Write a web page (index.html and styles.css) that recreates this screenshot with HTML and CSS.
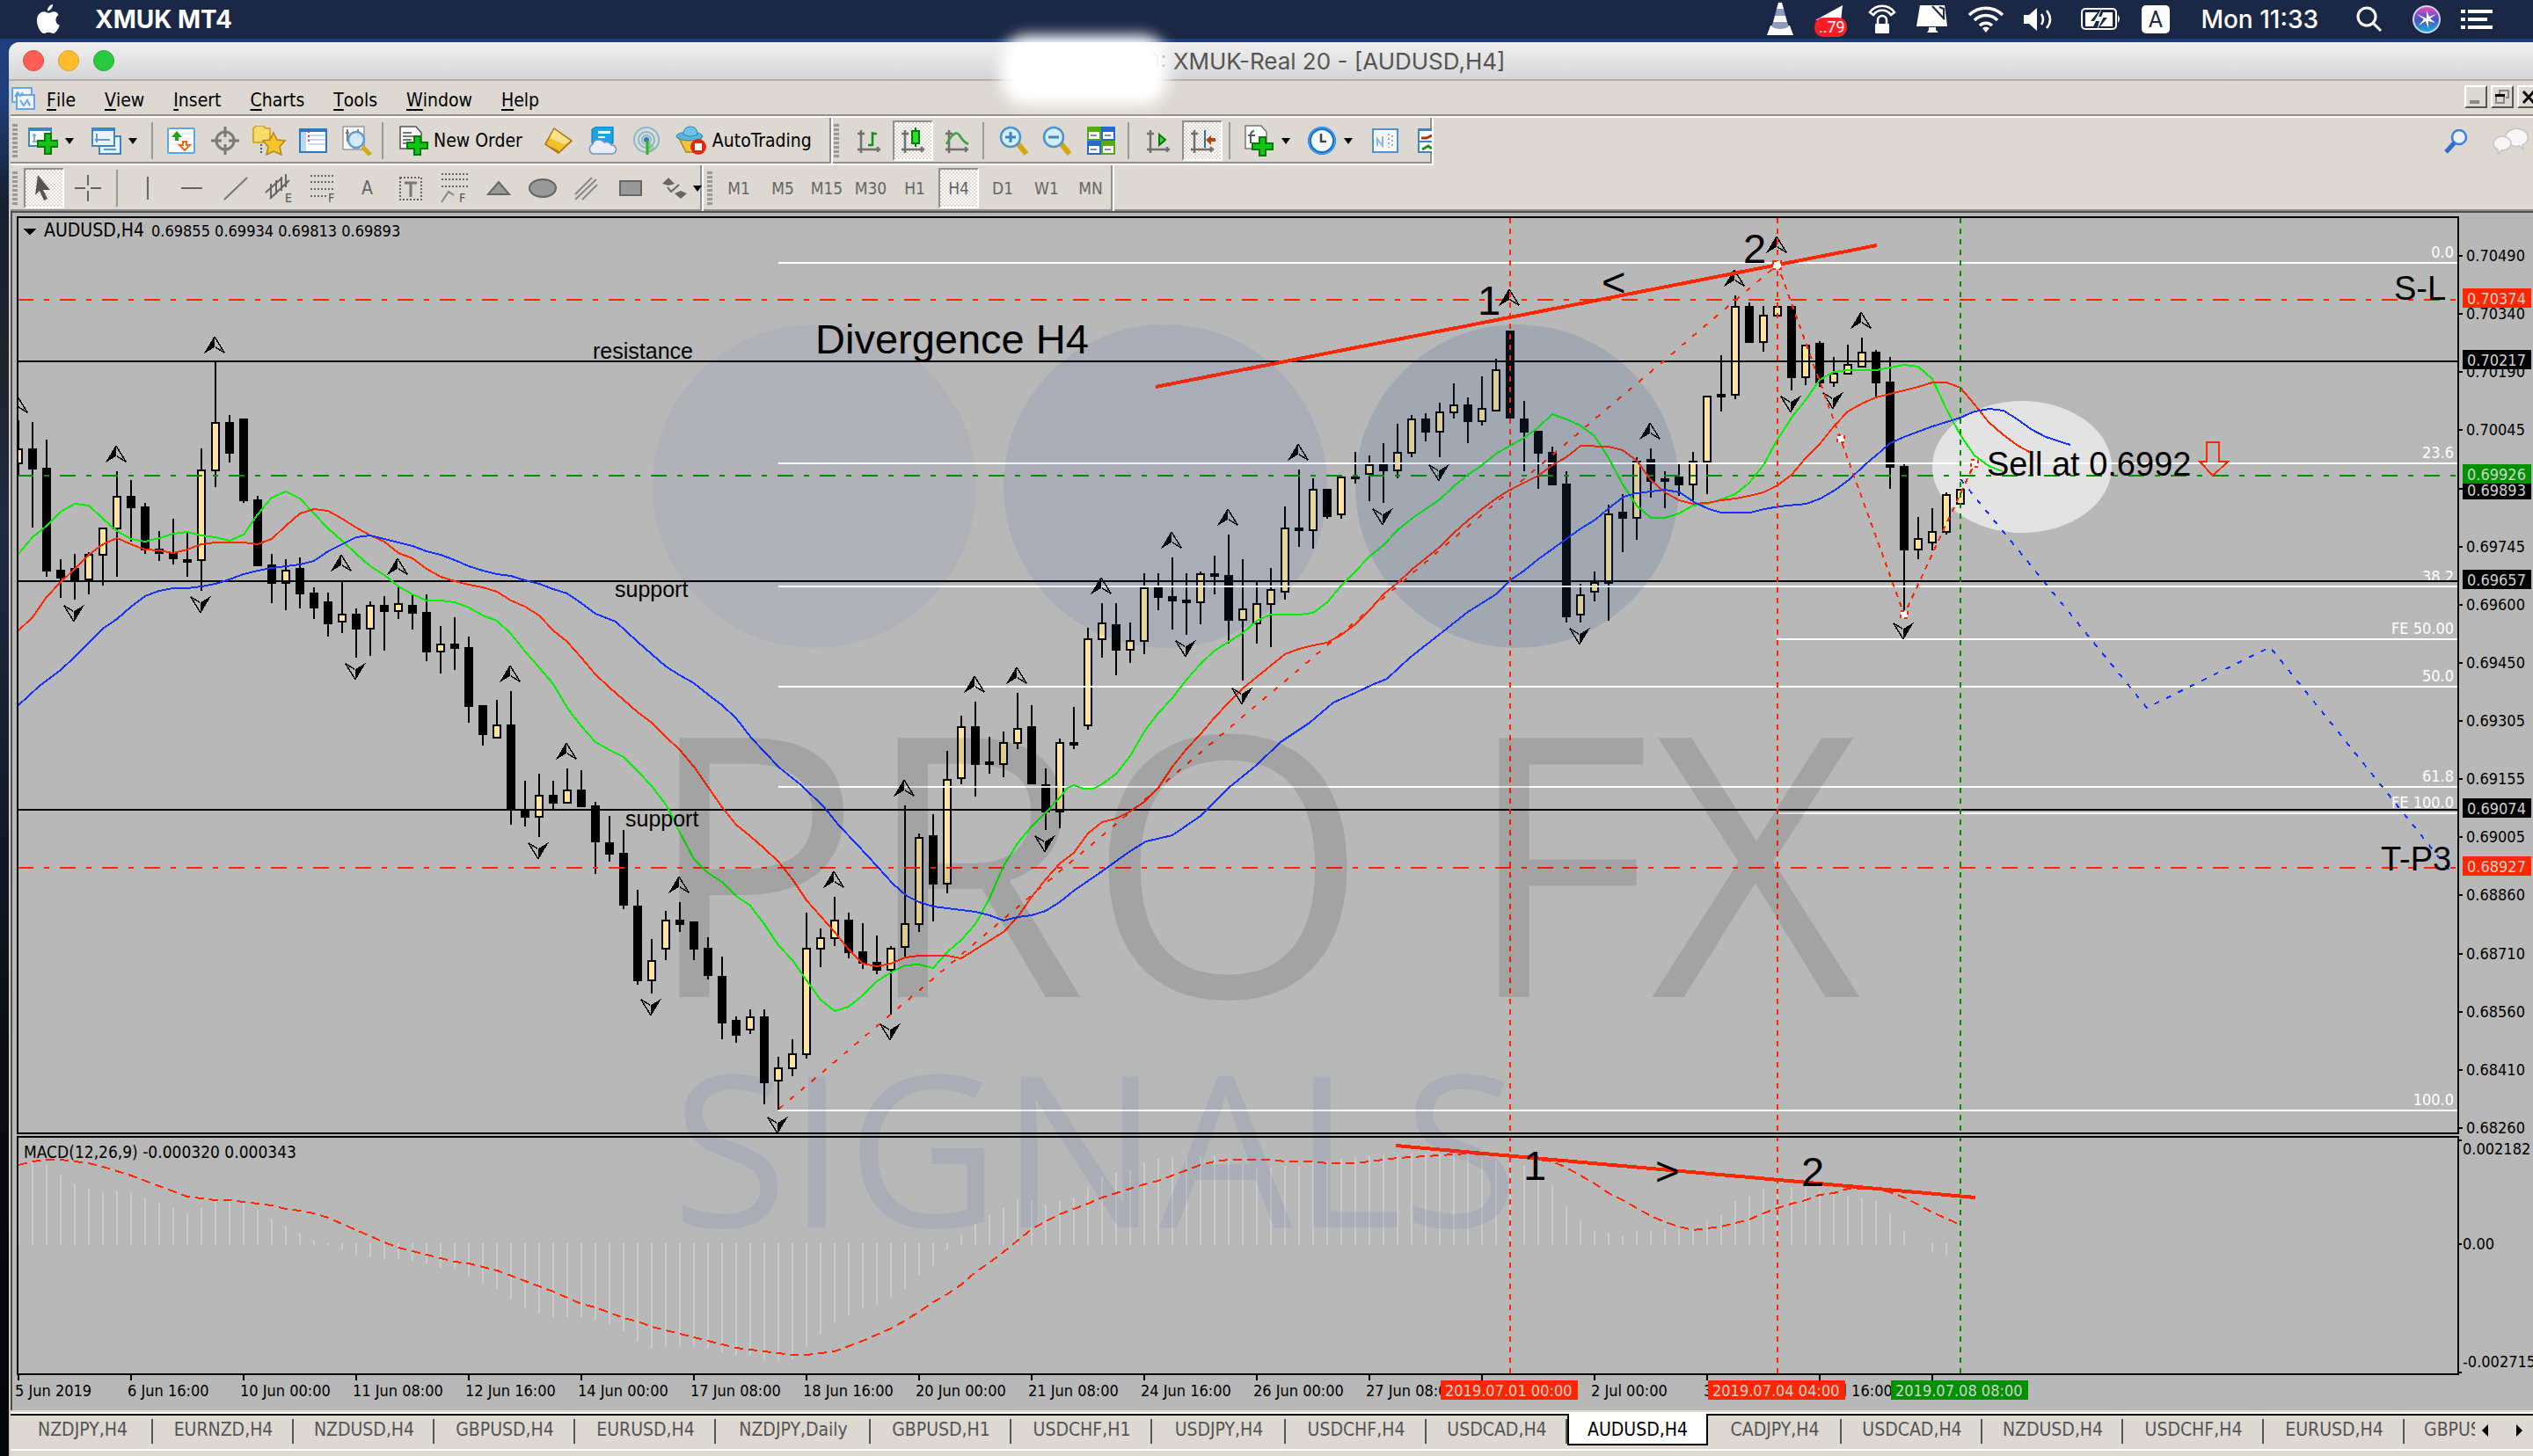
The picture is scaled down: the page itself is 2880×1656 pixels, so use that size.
FILE: index.html
```html
<!DOCTYPE html>
<html lang="en">
<head>
<meta charset="utf-8">
<title>XMUK-Real 20 - [AUDUSD,H4]</title>
<link rel="stylesheet" href="styles.css">
</head>
<body>
<header class="mac-bar">
  <button class="mac-item apple" aria-label="Apple menu"><svg width="26" height="34" viewBox="0 0 26 34"><path fill="#fff" d="M18 0c.3 3.500-3 7.500-6 7.400C11.600 4 15 .4 18 0zM24.500 12c-4.500 3-4 9.500 1.300 11.800C24.600 27.500 21.500 33 18.500 33c-2 0-2.800-1.200-5.200-1.200S10 33 8.200 33C4.500 33 0 25 0 18.500S4 8.300 7.800 8.300c2.300 0 3.800 1.500 5.600 1.500 1.700 0 3.500-1.600 6.300-1.500 2 0 3.800 1.500 4.800 3.700z"/></svg></button>
  <button class="mac-item app-name">XMUK MT4</button>
  <div class="mac-status">
    <button class="mac-item" aria-label="VLC"><svg width="32" height="38" viewBox="0 0 32 38"><path fill="#fff" d="M14 0h4l2 7h-8zM10 15h12l2 7H8zM5 26h22l4 11H1z"/><path fill="#8f9dbd" d="M12 7h8l2 8H10zM8 22h16l2 5c-5 4-15 4-20 0z"/></svg></button>
    <button class="mac-item" aria-label="Mail"><svg width="38" height="40" viewBox="0 0 38 40"><path fill="#fff" d="M1 21L32 4l-2 18-8-2z"/><rect x="0" y="18" width="37" height="22" rx="10" fill="#ff1d25"/><text x="5" y="35" class="badge-text">..79</text></svg></button>
    <button class="mac-item" aria-label="VPN"><svg width="32" height="34" viewBox="0 0 32 34"><g fill="none" stroke="#fff" stroke-width="2.500"><path d="M2 9a17 17 0 0 1 28 0l-4 3a12 12 0 0 0-20 0z"/><path d="M11 23v-5a5 5 0 0 1 10 0v5"/></g><rect x="8" y="22" width="16" height="11" rx="1" fill="#fff"/></svg></button>
    <button class="mac-item" aria-label="Display"><svg width="36" height="34" viewBox="0 0 36 34"><path fill="#fff" d="M4 1h28l3 24H0zM14 26h8v3l3 3H12l2-3z"/><path d="M18 2l14 15M26 3l5 2v12" fill="none" stroke="#1b2845" stroke-width="2"/></svg></button>
    <button class="mac-item" aria-label="Wi-Fi"><svg width="40" height="30" viewBox="0 0 40 30"><g fill="none" stroke="#fff" stroke-width="3.500"><path d="M1 10a27 27 0 0 1 38 0M7 16a18 18 0 0 1 26 0M13 22a10 10 0 0 1 14 0"/></g><path fill="#fff" d="M16 25a6 6 0 0 1 8 0l-4 5z"/></svg></button>
    <button class="mac-item" aria-label="Volume"><svg width="34" height="26" viewBox="0 0 34 26"><path fill="#fff" d="M0 8h6l9-8v26l-9-8H0z"/><g fill="none" stroke="#fff" stroke-width="2.500"><path d="M20 7q4 6 0 12M26 3q8 10 0 20"/></g></svg></button>
    <button class="mac-item battery" aria-label="Battery"><svg width="46" height="26" viewBox="0 0 46 26"><rect x="1" y="1" width="39" height="23" rx="4" fill="none" stroke="#fff" stroke-width="2"/><path fill="#fff" d="M5 5h14l-8 10h6l-3 6H5zM25 5h11v16H22l8-10h-7zM42 8q4 4 0 9zM24 0l-4 10h6l-8 16 3-11h-6z"/></svg></button>
    <button class="mac-item" aria-label="Input source"><svg width="32" height="32" viewBox="0 0 32 32"><rect width="32" height="32" rx="5" fill="#fff"/><text x="16" y="25" text-anchor="middle" class="input-text">A</text></svg></button>
    <button class="mac-item clock">Mon 11:33</button>
    <button class="mac-item" aria-label="Search"><svg width="30" height="30" viewBox="0 0 30 30"><g fill="none" stroke="#fff" stroke-width="3"><circle cx="12" cy="12" r="10"/><path d="M19 19l9 9"/></g></svg></button>
    <button class="mac-item siri" aria-label="Siri"><svg width="32" height="32" viewBox="0 0 32 32"><defs><linearGradient id="siri" x1="0" y1="0" x2="0" y2="1"><stop offset="0" stop-color="#f04fb8"/><stop offset=".5" stop-color="#4a50c8"/><stop offset="1" stop-color="#15b6d8"/></linearGradient></defs><circle cx="16" cy="16" r="15" fill="url(#siri)" stroke="#cfd5ea" stroke-width="2"/><path fill="#fff" d="M16 15l-11-5 8 6-6 7 8-5 3 8 0-8 8 2-6-5 7-5-8 3-3-7z"/></svg></button>
    <button class="mac-item" aria-label="Notification Center"><svg width="36" height="22" viewBox="0 0 36 22"><path fill="#fff" d="M0 0h5v4H0zM8 0h28v4H8zM0 9h5v4H0zM8 9h22v4H8zM0 18h5v4H0zM8 18h28v4H8z"/></svg></button>
  </div>
</header>

<main class="window">
  <div class="title-bar">
    <div class="lights"><button class="light red" aria-label="Close"></button><button class="light amber" aria-label="Minimise"></button><button class="light green" aria-label="Zoom"></button></div>
    <h1 class="title">0: XMUK-Real 20 - [AUDUSD,H4]</h1>
    <div class="redaction"></div>
  </div>

  <nav class="menu-bar">
    <svg class="doc-icon" width="30" height="28" viewBox="0 0 30 28"><g fill="#eef5fd" stroke="#6aa5ea" stroke-width="2"><rect x="2" y="2" width="22" height="16"/><rect x="7" y="10" width="20" height="16"/></g><path d="M5 12l3-5 3 4 3-4M11 16l4 6 4-6 3 6" fill="none" stroke="#6aa5ea" stroke-width="2"/></svg>
    <button><u>F</u>ile</button><button><u>V</u>iew</button><button><u>I</u>nsert</button><button><u>C</u>harts</button><button><u>T</u>ools</button><button><u>W</u>indow</button><button><u>H</u>elp</button>
    <div class="mdi">
      <button aria-label="Minimise chart"><svg width="22" height="22" viewBox="0 0 22 22"><path fill="#888" d="M4 15h11v4H4z"/></svg></button>
      <button aria-label="Restore chart"><svg width="22" height="22" viewBox="0 0 22 22"><path fill="none" stroke="#888" stroke-width="2" d="M8 8V4h10v8h-3M4 9h9v9H4z"/><path fill="#000" d="M3 8h11v3H3z"/></svg></button>
      <button aria-label="Close chart"><svg width="22" height="22" viewBox="0 0 22 22"><path d="M5 5l12 13M17 5L5 18" stroke="#000" stroke-width="3"/></svg></button>
    </div>
  </nav>

  <div class="tool-row">
    <div class="band">
      <i class="grip"></i>
      <button class="tool drop" aria-label="New chart"><svg width="34" height="32" viewBox="0 0 34 32"><path fill="#fff" stroke="#3f84c4" stroke-width="2" d="M1 2h25v20H1z"/><path fill="#3f84c4" d="M0 1h27v4H0z"/><path d="M7 8v10M5 10h4M5 17h14" stroke="#7eaed6" stroke-width="2"/><path fill="#12c512" stroke="#067a06" stroke-width="2" d="M19 8h7v8h8v7h-8v8h-7v-8h-8v-7h8z"/></svg></button>
      <button class="tool drop" aria-label="Profiles"><svg width="34" height="32" viewBox="0 0 34 32"><g fill="#e9f3fc" stroke="#3f84c4" stroke-width="2"><path d="M9 11h24v20H9z"/><path d="M1 2h25v20H1z"/></g><path fill="#3f84c4" d="M0 1h27v4H0z"/><path d="M6 8v10M4 15h17M14 26h14" stroke="#5a9bd3" stroke-width="2"/></svg></button>
      <i class="sep"></i>
      <button class="tool" aria-label="Market Watch"><svg width="32" height="32" viewBox="0 0 32 32"><rect x="1" y="2" width="30" height="28" rx="2" fill="#fff" stroke="#5aa6e0" stroke-width="2"/><path d="M5 8h22M5 14h22M5 20h22" stroke="#d8dde2"/><path fill="#1ea51e" d="M11 5l6 7h-4v4H9v-4H5z"/><path fill="#fff" stroke="#ee6c18" stroke-width="2" d="M18 17h4v4h4l-6 6-6-6h4z"/></svg></button>
      <button class="tool" aria-label="Data Window"><svg width="32" height="32" viewBox="0 0 32 32"><g fill="none" stroke="#7a7a7a" stroke-width="3"><circle cx="16" cy="16" r="10"/><path d="M16 0v12M16 20v12M0 16h12M20 16h12"/></g></svg></button>
      <button class="tool" aria-label="Navigator"><svg width="38" height="34" viewBox="0 0 38 34"><path fill="#f8dc6a" stroke="#c99b17" stroke-width="1.500" d="M1 3l4-3h7l3 3h5v16H1z"/><path d="M10 21v12" stroke="#555" stroke-width="2" stroke-dasharray="2 2"/><path fill="#f6c52e" stroke="#b98612" stroke-width="1.500" d="M24 8l4 8 9 1-6 7 2 9-9-4-8 4 2-9-6-7 8-1z"/></svg></button>
      <button class="tool" aria-label="Terminal"><svg width="32" height="32" viewBox="0 0 32 32"><path fill="#fff" stroke="#2f78bf" stroke-width="2" d="M1 3h30v26H1z"/><path fill="#2f78bf" d="M0 2h32v4H0z"/><path fill="#bcd7f3" d="M2 6h6v22H2z"/><path d="M10 10h20M10 15h20M10 20h20" stroke="#b8d0f0" stroke-width="1.500"/><path d="M11 5v14" stroke="#e33" stroke-width="2" stroke-dasharray="2 3"/></svg></button>
      <button class="tool" aria-label="Strategy Tester"><svg width="34" height="34" viewBox="0 0 34 34"><path fill="#fafafa" stroke="#9a9a9a" stroke-width="1.500" d="M1 1h24v26H1z"/><path d="M6 4v14M4 8h4M18 4v9" stroke="#777" stroke-width="2"/><path stroke="#d6a80f" stroke-width="5" d="M23 24l9 9"/><circle cx="16" cy="16" r="9" fill="#cfe8fb" fill-opacity=".9" stroke="#5d9cd0" stroke-width="2.500"/></svg></button>
      <i class="sep"></i>
      <button class="tool text order"><svg width="34" height="34" viewBox="0 0 34 34"><path fill="#fff" stroke="#555" stroke-width="1.500" d="M1 1h18l6 7v18H1z"/><path d="M4 8h10M4 12h16M4 16h10M4 20h8" stroke="#777" stroke-width="2"/><path fill="#12c512" stroke="#067a06" stroke-width="2" d="M17 12h7v7h8v7h-8v7h-7v-7H9v-7h8z"/></svg>New Order</button>
      <button class="tool" aria-label="MetaEditor"><svg width="34" height="32" viewBox="0 0 34 32"><path fill="#f3bf2d" stroke="#a66e0a" stroke-width="1.500" d="M12 2l20 14-15 14L2 20z"/><path fill="#fbe28a" d="M12 3l18 13-7 4L7 13z"/><path fill="#b97b0e" d="M2 20l15 7v3z"/></svg></button>
      <button class="tool" aria-label="Virtual hosting"><svg width="34" height="32" viewBox="0 0 34 32"><path fill="#17a6ea" stroke="#0b6dad" d="M5 3l5-3h19v19H5z"/><path fill="#fff" d="M12 5h14v3H12zM12 11h8v2h-8z"/><path fill="#e8edf7" stroke="#7b93bd" stroke-width="1.500" d="M6 31a6 6 0 0 1 0-11 7 6 0 0 1 13-2 6 5 0 0 1 8 3 5 5 0 0 1 1 10z"/></svg></button>
      <button class="tool" aria-label="Signals"><svg width="34" height="32" viewBox="0 0 34 32"><g fill="none" stroke="#8fb4c4" stroke-width="2"><circle cx="17" cy="15" r="14" fill="#d3e0dc"/><circle cx="17" cy="15" r="9"/><circle cx="17" cy="15" r="5"/></g><circle cx="17" cy="15" r="3" fill="#2a78c8"/><path d="M18 16v15l10-6z" fill="#6cc46c" fill-opacity=".6"/><path d="M18 16v16" stroke="#35b035" stroke-width="3"/></svg></button>
      <button class="tool text auto"><svg width="36" height="34" viewBox="0 0 36 34"><path fill="#f4c73a" stroke="#b08410" stroke-width="1.500" d="M3 12l27 0-8 18-10 0z"/><ellipse cx="16" cy="12" rx="15" ry="5" fill="#5cb4dc" stroke="#2c86b4"/><path fill="#6fc3e6" stroke="#2c86b4" d="M9 10q0-9 8-9t8 9q-8 4-16 0z"/><circle cx="26" cy="24" r="9" fill="#dd2b10"/><path fill="#fff" d="M22 20h8v8h-8z"/></svg>AutoTrading</button>
    </div>
    <div class="band charts">
      <i class="grip"></i>
      <button class="tool" aria-label="Bar chart"><svg width="32" height="32" viewBox="0 0 32 32"><path d="M7 4v26M3 8h8M3 26h26M26 23v6" stroke="#6f6f6f" stroke-width="2.500" fill="none"/><path d="M20 6v16M20 8h5M15 21h5" stroke="#129412" stroke-width="2.500"/></svg></button>
      <button class="tool pressed" aria-label="Candlesticks"><svg width="32" height="32" viewBox="0 0 32 32"><path d="M7 4v26M3 8h8M3 26h26M26 23v6" stroke="#6f6f6f" stroke-width="2.500"/><path d="M19 1v22" stroke="#067a06" stroke-width="2"/><path fill="#2be02b" stroke="#067a06" stroke-width="2" d="M15 5h8v14h-8z"/></svg></button>
      <button class="tool" aria-label="Line chart"><svg width="32" height="32" viewBox="0 0 32 32"><path d="M7 4v26M3 8h8M3 26h26M26 23v6" stroke="#6f6f6f" stroke-width="2.500"/><path d="M4 20Q14 2 19 10t10 10" fill="none" stroke="#3da13d" stroke-width="2.500"/></svg></button>
      <i class="sep"></i>
      <button class="tool" aria-label="Zoom in"><svg width="34" height="34" viewBox="0 0 34 34"><path stroke="#d6a80f" stroke-width="6" d="M21 20l10 12"/><circle cx="13" cy="13" r="11" fill="#d3edfc" stroke="#4b94cc" stroke-width="2.500"/><path d="M7 13h12M13 7v12" stroke="#3a86bd" stroke-width="3"/></svg></button>
      <button class="tool" aria-label="Zoom out"><svg width="34" height="34" viewBox="0 0 34 34"><path stroke="#d6a80f" stroke-width="6" d="M21 20l10 12"/><circle cx="13" cy="13" r="11" fill="#d3edfc" stroke="#4b94cc" stroke-width="2.500"/><path d="M7 13h12" stroke="#3a86bd" stroke-width="3"/></svg></button>
      <button class="tool" aria-label="Tile windows"><svg width="32" height="32" viewBox="0 0 32 32"><path fill="#56ab0c" d="M0 0h16v16H0zM16 16h16v16H16z"/><path fill="#2468d6" d="M16 0h16v16H16zM0 16h16v16H0z"/><path fill="#fff" d="M2 6h12v8H2zM18 6h12v8H18zM2 22h12v8H2zM18 22h12v8H18z"/><path d="M4 10h7M20 10h7M4 26h7M20 26h7" stroke="#88b" stroke-width="2"/></svg></button>
      <i class="sep"></i>
      <button class="tool" aria-label="Auto scroll"><svg width="32" height="32" viewBox="0 0 32 32"><path d="M7 4v26M3 8h8M3 26h26M26 23v6" stroke="#6f6f6f" stroke-width="2.500"/><path fill="#2be02b" stroke="#067a06" stroke-width="2" d="M17 9l7 6-7 6z"/></svg></button>
      <button class="tool pressed" aria-label="Chart shift"><svg width="32" height="32" viewBox="0 0 32 32"><path d="M7 4v26M3 8h8M3 26h26M26 23v6" stroke="#6f6f6f" stroke-width="2.500"/><path d="M19 4v20" stroke="#2a6fa8" stroke-width="2"/><path fill="#b6430c" d="M20 15l6-5v3h5v4h-5v4z"/></svg></button>
      <i class="sep"></i>
      <button class="tool drop" aria-label="Indicators"><svg width="34" height="36" viewBox="0 0 34 36"><path fill="#fff" stroke="#777" stroke-width="1.500" d="M1 1h18l6 7v19H1z"/><path d="M11 7q-4 0-4 6v8M4 12h8" fill="none" stroke="#555" stroke-width="2"/><path fill="#12c512" stroke="#067a06" stroke-width="2" d="M17 14h7v7h8v7h-8v7h-7v-7H9v-7h8z"/></svg></button>
      <button class="tool drop" aria-label="Periods"><svg width="34" height="34" viewBox="0 0 34 34"><circle cx="17" cy="17" r="14" fill="#f4f8fc" stroke="#1673d2" stroke-width="4"/><circle cx="17" cy="17" r="15" fill="none" stroke="#58b4f4" stroke-width="1"/><path d="M16 9v9h6" fill="none" stroke="#444" stroke-width="2.500"/></svg></button>
      <button class="tool" aria-label="Templates"><svg width="32" height="32" viewBox="0 0 32 32"><path fill="#f2f8fd" stroke="#4f92cc" stroke-width="2" d="M2 3h28v26H2z"/><path d="M7 22v-8l6 8V11" fill="none" stroke="#8db9dc" stroke-width="2"/><path d="M24 10v14M20 8v16" stroke="#aaa" stroke-width="2" stroke-dasharray="2 3"/></svg></button>
      <button class="tool cut" aria-label="Chart list"><svg width="16" height="32" viewBox="0 0 16 32"><path fill="#fff" stroke="#3f84c4" stroke-width="2" d="M1 3h20v26H1z"/><path fill="#3f84c4" d="M0 2h16v3H0zM0 16h16v2H0z"/><path d="M4 13h6l6-3" stroke="#a03a0c" stroke-width="3" fill="none"/><path d="M5 26l7-4 4 3" stroke="#1c8c1c" stroke-width="3" fill="none"/></svg></button>
    </div>
    <div class="tool-end">
      <button class="tool" aria-label="Find"><svg width="28" height="28" viewBox="0 0 28 28"><path stroke="#2c6fd0" stroke-width="5" d="M12 15L2 26"/><circle cx="17" cy="9" r="8" fill="#edf2fa" stroke="#3d7fdc" stroke-width="2.500"/></svg></button>
      <button class="tool" aria-label="Chat"><svg width="42" height="32" viewBox="0 0 42 32"><g fill="#f6f6f6" stroke="#c4c4c4" stroke-width="1.500"><path d="M34 20l1 5-4-4a13 10 0 1 1 3-1z"/><path d="M6 25l0 6 4-5a10 8 0 1 0-4-1z"/></g></svg></button>
    </div>
  </div>

  <div class="tool-row">
    <div class="band lines">
      <i class="grip"></i>
      <button class="tool pressed" aria-label="Cursor"><svg width="32" height="34" viewBox="0 0 32 34"><path fill="#555" d="M9 2l14 17h-8l5 10-4 2-5-11-5 5z"/></svg></button>
      <button class="tool" aria-label="Crosshair"><svg width="32" height="32" viewBox="0 0 32 32"><path d="M16 1v12M16 19v12M1 16h12M19 16h12" stroke="#666" stroke-width="2"/></svg></button>
      <i class="sep"></i>
      <button class="tool" aria-label="Vertical line"><svg width="32" height="32" viewBox="0 0 32 32"><path d="M16 3v26" stroke="#666" stroke-width="2"/></svg></button>
      <button class="tool" aria-label="Horizontal line"><svg width="32" height="32" viewBox="0 0 32 32"><path d="M4 16h24" stroke="#666" stroke-width="2"/></svg></button>
      <button class="tool" aria-label="Trendline"><svg width="32" height="32" viewBox="0 0 32 32"><path d="M3 29L29 4" stroke="#777" stroke-width="2"/></svg></button>
      <button class="tool" aria-label="Equidistant channel"><svg width="34" height="34" viewBox="0 0 34 34"><path d="M1 22L20 5M6 29L28 8M7 28V12M13 24V8M19 20V4M24 16V1" stroke="#666" stroke-width="2"/><text x="23" y="33" class="glyph">E</text></svg></button>
      <button class="tool" aria-label="Fibonacci retracement"><svg width="34" height="34" viewBox="0 0 34 34"><path d="M2 3h28M2 10h28M2 18h28M2 26h18" stroke="#666" stroke-width="2" stroke-dasharray="2 2"/><text x="22" y="33" class="glyph">F</text></svg></button>
      <button class="tool letter">A</button>
      <button class="tool" aria-label="Text label"><svg width="32" height="32" viewBox="0 0 32 32"><path d="M4 4h24v25H4z" fill="none" stroke="#666" stroke-width="2" stroke-dasharray="2 2"/><path d="M9 10h14M16 10v16" stroke="#777" stroke-width="3"/></svg></button>
      <button class="tool" aria-label="Fibonacci fan"><svg width="34" height="36" viewBox="0 0 34 36"><path d="M2 2h30M2 8h30M2 16h30" stroke="#666" stroke-width="2" stroke-dasharray="2 2"/><path d="M2 34l8-12 6 4" stroke="#888" stroke-width="2" fill="none"/><text x="22" y="34" class="glyph">F</text></svg></button>
      <button class="tool" aria-label="Triangle"><svg width="32" height="32" viewBox="0 0 32 32"><path fill="#999" stroke="#666" stroke-width="2" d="M4 23L16 9l12 14z"/></svg></button>
      <button class="tool" aria-label="Ellipse"><svg width="34" height="32" viewBox="0 0 34 32"><ellipse cx="17" cy="16" rx="15" ry="10" fill="#999" stroke="#666" stroke-width="2"/></svg></button>
      <button class="tool" aria-label="Hatch"><svg width="32" height="32" viewBox="0 0 32 32"><path d="M3 23L22 4M3 29L27 6M11 29l17-17" stroke="#888" stroke-width="2"/></svg></button>
      <button class="tool" aria-label="Rectangle"><svg width="32" height="32" viewBox="0 0 32 32"><path fill="#999" stroke="#666" stroke-width="2" d="M4 8h24v16H4z"/></svg></button>
      <button class="tool" aria-label="Arrows"><svg width="32" height="32" viewBox="0 0 32 32"><path fill="#666" d="M9 4l7 7-7 2-7-2zM23 28l-7-6 7-3 7 3z"/><path d="M8 15l4 5 9-8" stroke="#666" stroke-width="2" fill="none"/></svg></button>
      <i class="caret"></i>
    </div>
    <div class="band periods">
      <i class="grip"></i>
      <button class="tool period">M1</button><button class="tool period">M5</button><button class="tool period">M15</button><button class="tool period">M30</button><button class="tool period">H1</button><button class="tool period pressed">H4</button><button class="tool period">D1</button><button class="tool period">W1</button><button class="tool period">MN</button>
    </div>
  </div>

  <svg class="chart" viewBox="14 242 2866 1362" role="img" aria-label="AUDUSD H4 chart with MACD">
    <defs>
      <g id="up"><path d="M12 0L0 20l12-7z" fill="#000"/><path d="M12 1l11 18-10-6" fill="none" stroke="#000" stroke-width="1.500"/></g>
      <g id="down"><path d="M12 20L24 0 12 7z" fill="#000"/><path d="M12 19L1 1l10 6" fill="none" stroke="#000" stroke-width="1.500"/></g>
      <clipPath id="plot"><rect x="20" y="248" width="2775" height="1314"/></clipPath>
    </defs>
    <ellipse cx="2299" cy="531" rx="102" ry="75" fill="#e3e3e3"/>
    <g clip-path="url(#plot)">
      <g id="hist" class="hist"></g>
      <g id="candles"></g>
      <text class="fib" x="2790" y="293">0.0</text><text class="fib" x="2790" y="521">23.6</text><text class="fib" x="2790" y="662">38.2</text><text class="fib" x="2790" y="721">FE 50.00</text><text class="fib" x="2790" y="775">50.0</text><text class="fib" x="2790" y="889">61.8</text><text class="fib" x="2790" y="919">FE 100.0</text><text class="fib" x="2790" y="1257">100.0</text>
      <path class="level" d="M20 411H2795M20 661H2795M20 921H2795"/>
      <path class="white" d="M885 299H2795M885 527H2795M885 667H2795M885 781H2795M885 895H2795M885 1263H2795M2020 727H2795M2020 925H2795"/>
      <path class="order-line red" d="M20 341H2795M20 987H2795"/>
      <path class="order-line green" d="M20 541H2795"/>
      <g id="averages"></g>
      <g id="fractals"></g>
      <path class="trend" d="M1314 440L2134 279M1587 1303L2246 1362"/>
      <path class="zig" stroke="#ff2600" stroke-dasharray="6 10" d="M886 1261L2021 301"/>
      <path class="zig" stroke="#ff2600" stroke-dasharray="6 6" d="M2021 301L2165 699L2245 527"/>
      <path class="zig" stroke="#1432ff" stroke-dasharray="6 9" d="M2229 545L2441 805L2581 736L2785 990"/>
      <path class="vert red" d="M1717 248V1562M2021 248V1562"/>
      <path class="vert green" d="M2229 248V1562"/>
      <path class="mark" d="M2016 297h9v9h-9z" stroke="none"/><path class="mark" d="M2089 495h8v8h-8zM2161 695h8v8h-8zM2241 523h8v8h-8z"/>
      <g class="watermark">
        <circle cx="926" cy="553" r="184" fill="#3c50aa" fill-opacity=".05"/>
        <circle cx="1325" cy="553" r="184" fill="#3c50aa" fill-opacity=".1"/>
        <circle cx="1725" cy="553" r="184" fill="#345a8c" fill-opacity=".16"/>
        <text x="732" y="1134" font-size="413" fill="#000" fill-opacity=".11">PRO</text>
        <text x="1664" y="1134" font-size="413" fill="#000" fill-opacity=".11">FX</text>
        <text x="764" y="1396" font-size="240" fill="#3c50aa" fill-opacity=".1">SIGNALS</text>
      </g>
    </g>
    <path class="frame" d="M20 1289V247H2795V1289ZM20 1563V1293H2795V1563Z"/>
    <path d="M26 260h15l-7 8z"/>
    <text class="symbol" x="50" y="269">AUDUSD,H4</text><text class="small" x="172" y="269">0.69855 0.69934 0.69813 0.69893</text>
    <text class="macd" x="27" y="1317">MACD(12,26,9) -0.000320 0.000343</text>
    <text class="note" x="674" y="408">resistance</text><text class="note" x="699" y="679">support</text><text class="note" x="711" y="940">support</text>
    <text class="big" x="927" y="402">Divergence H4</text>
    <text class="big" x="1680" y="358">1</text><text class="big" x="1982" y="299">2</text><text class="big" x="1821" y="337">&lt;</text>
    <text class="big" x="1732" y="1342">1</text><text class="big" x="2048" y="1349">2</text><text class="big" x="1882" y="1348">&gt;</text>
    <text class="label" x="2259" y="541">Sell at 0.6992</text><text class="label" x="2722" y="341">S-L</text><text class="label" x="2707" y="990">T-P3</text>
    <path class="sell-arrow" d="M2509 503H2523V525H2533L2516 541L2501 525H2509Z"/>
    <g id="axis"></g>
  </svg>

  <nav class="tabs">
    <a href="#">NZDJPY,H4</a><a href="#">EURNZD,H4</a><a href="#">NZDUSD,H4</a><a href="#">GBPUSD,H4</a><a href="#">EURUSD,H4</a><a href="#" class="wide">NZDJPY,Daily</a><a href="#">GBPUSD,H1</a><a href="#">USDCHF,H1</a><a href="#" class="narrow">USDJPY,H4</a><a href="#">USDCHF,H4</a><a href="#">USDCAD,H4</a><a href="#" class="active">AUDUSD,H4</a><a href="#" class="narrow">CADJPY,H4</a><a href="#">USDCAD,H4</a><a href="#">NZDUSD,H4</a><a href="#">USDCHF,H4</a><a href="#">EURUSD,H4</a><a href="#" class="last">GBPUSD,H4</a>
    <div class="scroll"><button aria-label="Scroll left"><svg width="8" height="14" viewBox="0 0 8 14"><path d="M7 0v14L0 7z"/></svg></button><button aria-label="Scroll right"><svg width="8" height="14" viewBox="0 0 8 14"><path d="M1 0v14l7-7z"/></svg></button></div>
  </nav>
</main>
<script src="chart.js"></script>
</body>
</html>
```
FILE: styles.css
```css
* { box-sizing: border-box; }
body { margin: 0; background: #10151f linear-gradient(#1f3f7c 0, #1f3f7c 110px, #16202f 230px, #20242c 420px, #1d2b42 600px, #0a0c12 1200px, #05060a 100%); font-family: "DejaVu Sans Condensed", "Open Sans", sans-serif; font-size: 21px; color: #000; overflow-x: hidden; }
button { border: 0; padding: 0; margin: 0; background: none; font: inherit; color: inherit; display: flex; align-items: center; justify-content: center; }
svg { display: block; flex: none; }

.mac-bar { display: flex; align-items: center; height: 44px; margin-bottom: 4px; padding: 0 46px 0 42px; background: #1b2845; color: #fff; font-family: Inter, sans-serif; font-size: 28px; font-weight: 500; }
.mac-item { height: 44px; white-space: nowrap; }
.apple { margin-right: 40px; }
.app-name { font-weight: 700; font-size: 28px; }
.mac-status { display: flex; align-items: center; gap: 23px; margin-left: auto; }
.battery { margin-left: 8px; }
.clock { margin: 0 20px 0 12px; }
.siri { margin-left: 11px; }
.badge-text { font: 18px Roboto, sans-serif; fill: #fff; }
.input-text { font: 25px Roboto, sans-serif; fill: #1b2845; }

.window { margin-left: 10px; background: #ddd8d1; border-left: 2px solid #d0ccc6; border-radius: 12px 0 0 0; }
.title-bar { position: relative; display: flex; align-items: center; justify-content: center; height: 44px; margin-left: -2px; background: linear-gradient(#f0f0f0, #d6d6d6); border-bottom: 2px solid #b0b0b0; border-radius: 12px 0 0 0; }
.lights { position: absolute; left: 16px; display: flex; gap: 16px; }
.light { width: 24px; height: 24px; border-radius: 50%; }
.red.light { background: #ff5f57; border: 1px solid #e2463f; }
.amber.light { background: #ffbd2e; border: 1px solid #dfa023; }
.green.light { background: #28c940; border: 1px solid #1dad2b; }
.title { margin: 0 0 0 124px; font: 26px Inter, sans-serif; color: #555; white-space: nowrap; }
.redaction { position: absolute; left: 1128px; top: -8px; width: 190px; height: 80px; border-radius: 30px; background: #fff; filter: blur(8px); z-index: 2; }

.menu-bar { display: flex; align-items: center; gap: 33px; height: 42px; border-bottom: 2px solid #fff; box-shadow: inset 0 -2px #8f8f8f; overflow: hidden; }
.menu-bar > button { height: 34px; padding-top: 4px; }
.menu-bar u { text-underline-offset: 3px; text-decoration-thickness: 2px; }
.doc-icon { margin-right: -22px; }
.mdi { display: flex; gap: 4px; margin: 0 -8px 4px auto; }
.mdi button { width: 26px; height: 26px; border: 2px solid; border-color: #fff #555 #555 #fff; }

.tool-row { display: flex; height: 54px; color: #666; }
.band { display: flex; align-items: center; padding: 0 0 0 2px; height: 54px; border-bottom: 2px solid #fff; border-right: 2px solid #fff; box-shadow: inset -2px -2px #8f8f8f; }
.band:first-child { color: #000; }
.grip { width: 6px; height: 38px; margin-right: 5px; background: repeating-linear-gradient(#999 0 3px, transparent 3px 5px); }
.sep { width: 2px; height: 42px; margin: 0 7px 0 3px; background: #9a9a9a; }
.tool { width: 50px; height: 46px; }
.drop { width: 72px; justify-content: flex-start; padding-left: 7px; gap: 8px; }
.drop::after, .caret { content: ""; border: 5px solid transparent; border-top: 7px solid #000; border-bottom: 0; }
.text { width: auto; gap: 5px; white-space: nowrap; }
.order { padding: 0 16px 0 11px; }
.auto { padding: 0 22px 0 8px; gap: 6px; }
.charts { padding-left: 1px; width: 683px; overflow: hidden; }
.charts .grip { margin-right: 10px; }
.charts .sep { margin: 0 9px 0 5px; }
.cut { width: 28px; justify-content: flex-end; }
.pressed { width: 46px; margin: 0 2px; border: 2px solid; border-color: #8f8f8f #fff #fff #8f8f8f; background: repeating-conic-gradient(#fff 0 25%, #ddd8d1 0 50%) 0 0 / 4px 4px; }
.tool-end { display: flex; gap: 12px; align-items: center; margin-left: auto; }
.tool-end .tool { height: 50px; }
.lines { width: 788px; overflow: hidden; }
.tool-row + .tool-row { border-bottom: 2px solid #505050; box-shadow: inset 0 -2px #8f8f8f; }
.tool-row + .tool-row .band { height: 52px; border-bottom: 0; }
.lines .sep { margin: 0 9px 0 7px; }
.caret { flex: none; margin-left: -4px; }
.letter { color: #666; font-size: 21px; }
.glyph { font-size: 14px; fill: #555; }
.period { font-size: 19px; color: #666; }
.periods { padding-left: 4px; }

.chart { width: 100%; height: auto; background: #b8b8b8; border-left: 2px solid #505050; }
.chart path, .chart rect { shape-rendering: crispEdges; }
.hist { stroke: #cacaca; stroke-width: 2; }
.bull { fill: #fde496; stroke: #000; stroke-width: 2; }
.wick { stroke: #000; stroke-width: 2; }
.level, .frame { fill: none; stroke: #000; stroke-width: 2; }
.white { stroke: #fff; stroke-width: 2; }
.order-line { stroke-width: 2; stroke-dasharray: 18 12 6 12; }
.order-line.red, .vert.red { stroke: #ff2600; }
.order-line.green, .vert.green { stroke: #009000; }
.vert { stroke-width: 2; stroke-dasharray: 6 6; }
.average, .zig { fill: none; stroke-width: 2; }
.average { shape-rendering: crispEdges; }
.signal { stroke-dasharray: 10 6; }
.trend { stroke: #ff2600; stroke-width: 4; }
.mark { fill: #fff; stroke: #ff2600; stroke-width: 2; stroke-dasharray: 4 4; }
.watermark text { font-family: "Open Sans", sans-serif; }
.small, .fib, .axis { font-size: 18px; }
.symbol { font-size: 21px; }
.macd { font-size: 19px; }
.fib { fill: #fff; text-anchor: end; }
.note { font: 25px "Liberation Sans", sans-serif; }
.big { font: 47px "Liberation Sans", sans-serif; }
.label { font: 38px "Liberation Sans", sans-serif; }
.sell-arrow { fill: none; stroke: #ff2600; stroke-width: 2; }
.boxed { fill: #d0d0d0; }

.tabs { display: flex; position: relative; height: 52px; padding-left: 2px; overflow: hidden; color: #555; border-top: 2px solid #ddd8d1; background: linear-gradient(#fff 2px, #000 2px 4px, transparent 4px 42px, #fff 42px 44px, transparent 44px); }
.tabs a { flex: none; width: 160px; height: 36px; margin-top: 4px; color: inherit; text-decoration: none; text-align: center; line-height: 32px; background: linear-gradient(#555, #555) right 4px / 2px 28px no-repeat; }
.tabs .narrow { width: 152px; }
.tabs .wide { width: 176px; }
.tabs .active { color: #000; background: #fff; border: 2px solid #000; border-top: 0; margin-top: 2px; padding-top: 2px; }
.tabs .last { width: 80px; padding-left: 22px; text-align: left; overflow: hidden; background: none; }
.scroll { display: flex; gap: 30px; margin: 8px 12px 16px auto; }
```
FILE: chart.js
```js
// Screen geometry: one bar every 16 units, the first at x = 21.
const NS = "http://www.w3.org/2000/svg";
const barX = i => 21 + 16 * i;
const add = (parent, tag, attrs, text) => {
  const el = document.createElementNS(NS, tag);
  for (const k in attrs) el.setAttribute(k, attrs[k]);
  if (text) el.textContent = text;
  parent.appendChild(el);
  return el;
};
const byId = id => document.getElementById(id);

// Each candle: high, body top, body bottom, low, 1 when it closes up.
const candles = `478 510 528 540 1|480 510 534 600 0|500 532 650 656 0|636 648 658 680 0|630 646 661 682 0|628 630 660 676 1|600 600 632 666 1|536 564 602 656 1|546 564 578 616 0|572 576 626 630 0
604 624 630 638 0|590 628 636 642 0|606 636 640 656 0|510 534 638 672 1|412 480 536 554 1|472 480 516 526 0|476 476 570 572 0|564 568 644 644 0|630 642 664 686 0|636 648 664 694 1
634 646 676 692 0|668 674 692 704 0|674 684 710 724 0|662 698 708 720 1|692 698 716 748 0|684 688 716 746 1|678 688 696 740 0|666 686 696 704 1|676 688 698 716 0|676 696 742 752 0
712 732 742 766 1|702 732 738 762 0|724 736 804 822 0|802 802 836 848 0|796 824 840 840 1|786 824 922 938 0|888 920 930 940 0|880 904 930 952 1|888 904 914 920 0|874 898 914 914 1
876 898 918 918 0|912 916 958 994 0|928 958 972 980 0|944 970 1030 1034 0|1012 1030 1116 1120 0|1068 1092 1116 1130 1|1036 1046 1080 1092 1|1026 1046 1052 1060 0|1048 1048 1080 1092 0|1066 1078 1110 1114 0
1088 1110 1164 1182 0|1156 1160 1178 1186 0|1148 1156 1172 1176 1|1148 1156 1232 1256 0|1202 1214 1230 1262 1|1182 1198 1216 1224 1|1038 1078 1200 1204 1|1056 1066 1080 1100 1|1020 1046 1068 1076 1|1038 1046 1084 1090 0
1050 1082 1096 1102 0|1064 1094 1104 1108 0|1076 1078 1104 1154 1|916 1050 1078 1090 1|948 952 1052 1060 1|926 950 1006 1048 0|854 886 1006 1016 1|814 826 886 892 1|798 826 870 906 0|838 866 870 880 0
832 844 870 884 1|788 828 846 852 1|802 826 892 892 0|874 892 924 944 0|840 844 924 942 1|804 844 848 852 0|714 726 826 830 1|686 708 728 748 1|686 710 740 768 0|708 728 740 754 1
652 668 730 744 1|652 668 680 694 0|634 678 684 716 0|652 682 686 722 0|650 652 686 710 1|632 652 656 676 0|608 654 706 732 0|636 692 706 774 1|662 686 710 732 1|646 670 688 736 1
576 600 674 682 1|534 600 604 622 0|544 556 604 624 1|556 556 588 590 0|542 542 586 590 1|514 542 545 550 0|518 528 540 570 1|504 528 536 572 0|482 514 536 544 1|472 476 516 520 1
470 476 492 502 0|458 468 492 520 1|436 460 470 476 1|452 460 480 504 0|428 464 480 484 1|408 420 468 468 1|376 376 476 476 0|456 476 492 536 0|490 490 516 556 0|508 514 552 552 0
536 550 702 708 0|664 676 700 708 1|650 662 674 684 1|574 584 664 706 1|562 582 590 628 0|520 524 590 614 1|510 522 548 566 0|536 544 548 578 0|528 542 552 564 0|514 524 552 570 1
450 450 526 562 1|404 448 452 468 0|336 348 450 454 1|344 348 390 390 0|348 358 390 400 1|348 348 360 360 1|348 348 430 444 0|392 392 430 438 1|388 390 436 440 0|406 424 436 440 1
392 414 426 426 1|384 400 418 418 1|398 400 436 452 0|406 434 532 556 0|528 530 626 694 0|588 612 626 636 1|578 604 618 626 1|560 562 606 608 1|556 556 574 574 1`
  .split(/[|\n]/).map(s => s.trim().split(" ").map(Number));

candles.forEach(([high, top, bottom, low, up], i) => {
  const x = barX(i), g = byId("candles");
  add(g, "path", { class: "wick", d: `M${x} ${high}V${low}` });
  if (up) add(g, "rect", { class: "bull", x: x - 4, y: top + 1, width: 8, height: bottom - top - 2 });
  else add(g, "rect", { x: x - 5, y: top, width: 10, height: bottom - top });
});

// Fractal arrows: bar index, top of the arrow.
const ups = [[0,450],[7,506],[14,382],[23,630],[27,634],[35,756],[39,844],[47,996],[58,990],[63,886],[68,768],[71,758],[77,656],[82,604],[86,578],[91,504],[106,328],[116,480],[122,306],[125,268],[131,354]];
const downs = [[4,688],[13,678],[24,754],[37,958],[45,1136],[54,1270],[62,1164],[73,950],[83,728],[87,782],[97,578],[101,528],[111,714],[126,450],[129,446],[134,708]];
ups.forEach(([i, y]) => add(byId("fractals"), "use", { href: "#up", x: barX(i) - 13, y }));
downs.forEach(([i, y]) => add(byId("fractals"), "use", { href: "#down", x: barX(i) - 13, y }));

// MACD histogram, one value per bar.
const macd = [1322,1321,1324,1336,1346,1352,1356,1354,1356,1362,1368,1374,1380,1374,1366,1362,1368,1376,1386,1394,1402,1410,1416,1422,1428,1430,1432,1432,1434,1438,1442,1444,1452,1460,1466,1478,1488,1494,1498,1498,1498,1502,1506,1514,1526,1534,1532,1532,1532,1534,1538,1542,1542,1548,1548,1546,1532,1518,1504,1496,1488,1484,1476,1466,1450,1440,1422,1404,1392,1382,1374,1364,1366,1370,1366,1362,1350,1338,1334,1330,1322,1318,1316,1316,1314,1314,1318,1324,1328,1328,1326,1326,1322,1320,1318,1316,1314,1314,1314,1312,1312,1312,1312,1314,1318,1320,1318,1326,1336,1348,1372,1388,1400,1402,1406,1400,1400,1398,1398,1398,1388,1382,1366,1360,1352,1348,1350,1350,1354,1358,1360,1362,1366,1380,1400,1415,1424,1428,1426];
macd.forEach((y, i) => add(byId("hist"), "path", { d: `M${barX(i)} ${y < 1415 ? 1416 : 1414}V${y}` }));

const curves = {
  "#00f000": "20 631 37 611 53 598 69 582 85 573 101 575 117 590 133 604 149 613 165 616 181 612 197 607 213 605 229 609 245 611 261 615 277 608 293 585 309 566 325 559 341 567 357 584 373 601 389 615 405 630 421 644 437 654 453 667 469 676 485 683 501 683 517 685 533 691 549 700 565 706 581 721 597 741 613 759 629 778 645 805 661 826 677 844 693 853 709 861 725 877 741 894 757 915 765 930 773 947 789 977 805 993 821 1003 837 1019 853 1030 869 1051 885 1075 901 1092 917 1115 933 1137 949 1150 965 1145 981 1132 997 1116 1013 1106 1029 1098 1045 1097 1061 1101 1077 1083 1093 1069 1109 1051 1125 1022 1141 985 1157 959 1173 940 1189 924 1205 907 1214 896 1221 893 1232 897 1243 897 1253 892 1269 880 1285 860 1301 832 1317 811 1333 794 1349 773 1365 755 1381 740 1397 730 1413 720 1429 706 1445 699 1477 699 1493 697 1509 685 1525 666 1541 650 1557 633 1573 620 1589 603 1605 590 1621 579 1637 568 1653 553 1669 540 1685 529 1701 516 1717 507 1733 498 1749 486 1765 471 1781 477 1797 484 1813 496 1829 521 1845 551 1861 575 1877 589 1893 589 1909 584 1925 575 1941 573 1957 568 1973 562 1989 549 2005 529 2021 500 2037 475 2053 455 2069 432 2085 423 2101 421 2133 421 2149 418 2165 415 2181 417 2197 431 2213 465 2229 495 2245 518 2261 530 2277 536",
  "#ff2600": "20 718 37 702 53 679 69 662 85 647 101 631 117 619 133 612 149 619 165 625 181 626 197 629 213 625 229 619 245 617 277 617 293 619 309 613 325 598 341 584 357 579 373 581 389 590 405 600 421 609 437 616 453 629 469 635 485 647 501 656 517 661 533 665 549 668 565 673 581 683 597 690 613 700 629 717 645 730 661 748 677 767 693 782 709 796 725 810 741 822 757 838 773 853 789 872 805 895 821 918 837 938 853 951 869 965 885 980 901 1000 917 1024 933 1042 949 1060 965 1080 981 1096 997 1099 1013 1096 1029 1089 1045 1087 1077 1087 1093 1090 1109 1080 1125 1070 1141 1060 1157 1043 1173 1020 1189 1000 1205 982 1221 970 1237 948 1253 935 1269 931 1285 923 1301 912 1317 896 1333 872 1349 852 1365 835 1381 816 1397 799 1413 783 1429 770 1445 757 1461 744 1477 738 1493 734 1509 731 1525 722 1541 710 1557 694 1573 676 1589 663 1605 648 1621 635 1637 622 1653 606 1669 592 1685 579 1701 567 1717 557 1733 549 1749 541 1765 529 1781 520 1797 507 1829 508 1845 512 1861 524 1877 546 1893 560 1909 569 1925 573 1941 572 1957 569 1973 567 1989 564 2005 560 2021 552 2037 540 2053 521 2069 505 2085 485 2101 468 2117 459 2133 452 2149 448 2165 444 2181 440 2197 435 2213 435 2229 441 2245 460 2261 480 2277 494 2293 506 2309 515",
  "#1432ff": "20 803 45 780 69 762 85 747 101 731 117 715 133 704 149 690 165 678 181 672 197 669 213 669 229 667 245 664 261 659 277 653 293 649 309 646 325 644 341 642 357 638 373 627 389 619 405 611 421 609 437 613 453 617 469 621 485 627 501 631 517 637 533 644 549 649 565 653 581 655 597 660 613 664 629 670 645 675 661 686 677 698 700 707 725 730 741 744 757 758 773 768 789 777 805 790 821 802 837 817 854 839 870 856 886 873 911 893 937 918 954 939 974 960 998 986 1015 1005 1031 1019 1045 1026 1061 1031 1077 1033 1093 1035 1109 1037 1125 1041 1141 1047 1157 1043 1173 1041 1189 1036 1205 1026 1221 1013 1253 991 1285 968 1303 957 1333 950 1365 928 1381 912 1397 896 1429 870 1456 844 1489 822 1516 799 1541 788 1560 779 1577 772 1603 748 1636 722 1669 696 1701 676 1717 660 1733 649 1749 636 1781 613 1796 602 1814 591 1828 579 1846 565 1860 561 1877 559 1893 557 1910 560 1926 571 1943 579 1957 583 1990 583 2006 579 2023 576 2054 573 2070 567 2087 557 2103 545 2120 529 2140 512 2149 504 2165 497 2197 485 2229 475 2245 468 2262 465 2278 467 2294 477 2309 488 2326 497 2354 506"
};
for (const color in curves) add(byId("averages"), "polyline", { class: "average", points: curves[color], stroke: color });

// MACD signal line, given in thirds of a unit below y = 1290.
const signal = [104,93,87,87,92,99,111,126,141,159,177,195,212,219,225,225,231,237,243,255,261,271,284,306,326,349,368,386,399,411,422,434,440,452,464,483,501,519,537,559,578,591,608,626,639,656,669,681,693,704,716,729,735,741,747,752,752,747,740,722,704,685,662,637,605,573,545,512,472,437,401,362,323,297,272,254,237,217,200,187,171,158,141,123,105,92,87,87,87,87,93,93,93,98,99,98,93,87,81,79,74,71,69,67,68,72,76,82,88,94,114,140,168,200,226,253,279,300,315,326,321,314,302,290,270,253,237,224,208,200,187,187,187,198,216,240,266,289,310];
add(byId("averages"), "polyline", { class: "average signal", stroke: "#ff2600", points: signal.map((v, i) => `${barX(i)},${Math.round(1290 + v / 3)}`).join(" ") });

const axis = byId("axis");
["0.70490","0.70340","0.70190","0.70045","0.69895","0.69745","0.69600","0.69450","0.69305","0.69155","0.69005","0.68860","0.68710","0.68560","0.68410","0.68260"].forEach((p, i) => {
  const y = 291 + Math.round(66.13 * i);
  add(axis, "path", { class: "level", d: `M2795 ${y}h5` });
  if (i !== 4) add(axis, "text", { class: "axis", x: 2804, y: y + 6 }, p);
});
[["0.002182",1313],["0.00",1421],["-0.002715",1555]].forEach(([t, y]) => add(axis, "text", { class: "axis", x: 2800, y }, t));
add(axis, "path", { class: "level", d: "M2795 1297h4M2795 1415h4M2795 1561h4" });
["5 Jun 2019","6 Jun 16:00","10 Jun 00:00","11 Jun 08:00","12 Jun 16:00","14 Jun 00:00","17 Jun 08:00","18 Jun 16:00","20 Jun 00:00","21 Jun 08:00","24 Jun 16:00","26 Jun 00:00","27 Jun 08:00","","2 Jul 00:00","3 Jul 08:00","4 Jul 16:00",""].forEach((t, i) => {
  const x = 21 + 128 * i;
  add(axis, "path", { class: "level", d: `M${x} 1564v6` });
  if (t) add(axis, "text", { class: "axis", x: x - 4, y: 1588 }, t);
});
const box = (x, y, w, fill, t) => {
  add(axis, "rect", { x, y, width: w, height: 22, fill });
  add(axis, "text", { class: "axis boxed", x: x + 5, y: y + 18 }, t);
};
box(2800, 328, 78, "#ff2600", "0.70374");
box(2800, 398, 78, "#000", "0.70217");
box(2800, 546, 78, "#000", "0.69893");
box(2800, 528, 78, "#009000", "0.69926");
box(2800, 648, 78, "#000", "0.69657");
box(2800, 908, 78, "#000", "0.69074");
box(2800, 974, 78, "#ff2600", "0.68927");
box(1638, 1570, 156, "#ff2600", "2019.07.01 00:00");
box(1942, 1570, 156, "#ff2600", "2019.07.04 04:00");
box(2150, 1570, 156, "#009000", "2019.07.08 08:00");
```
